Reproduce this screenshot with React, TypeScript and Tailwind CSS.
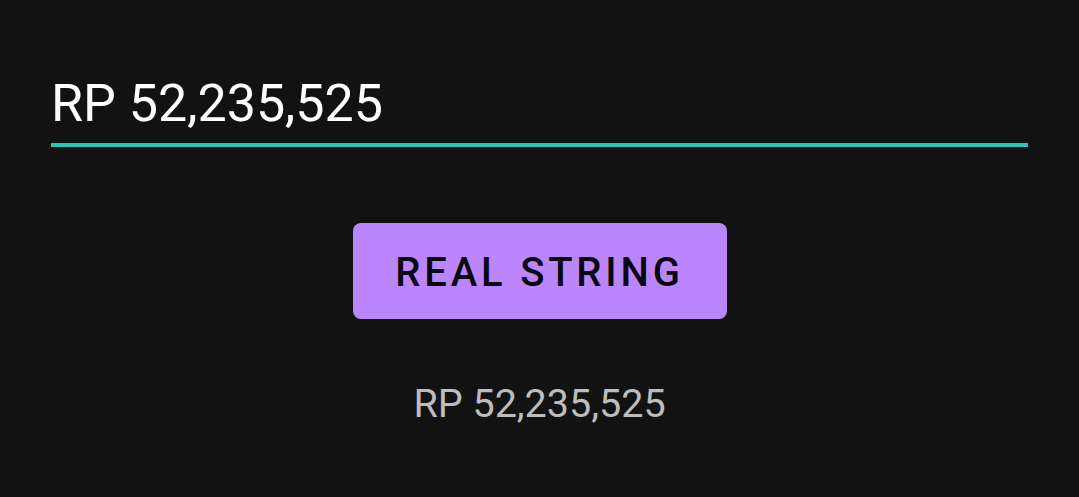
import React from 'react';

export default function App() {
  const value = 'RP 52,235,525';

  return (
    <div className="w-full h-[497px] bg-[#121212] font-['Roboto',sans-serif] flex flex-col overflow-hidden">
      <div className="px-[51px] pt-[70px]">
        <div className="text-white text-[52px] leading-[68px] pb-[5px] border-b-4 border-[#1fcbb6]">
          {value}
        </div>
      </div>

      <div className="flex justify-center pt-[76px]">
        <button className="w-[374px] h-[96px] pt-[4px] rounded-[8px] bg-[#bb86fc] text-[#0a0612] text-[40px] font-medium tracking-[0.095em] uppercase">
          Real String
        </button>
      </div>

      <p className="text-center text-[#bdbdbd] text-[39.5px] leading-[48px] pt-[61px]">
        {value}
      </p>
    </div>
  );
}
